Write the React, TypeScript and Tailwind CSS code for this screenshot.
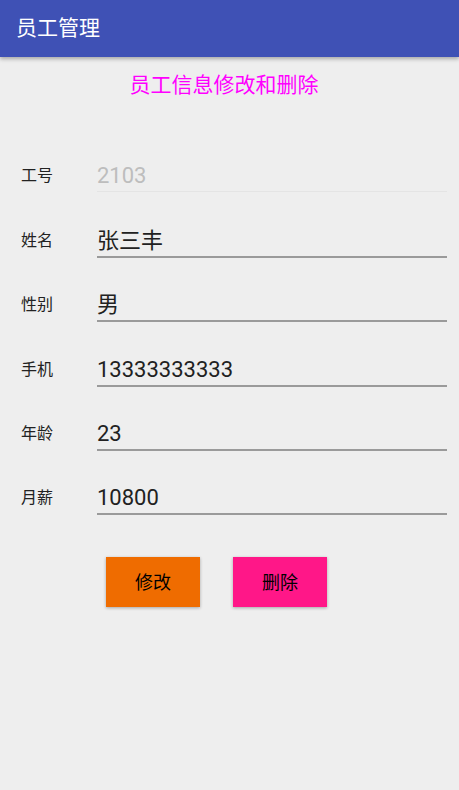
const font = { fontFamily: 'Roboto, "Noto Sans CJK SC", sans-serif' };

interface Field {
  label: string;
  value: string;
  disabled?: boolean;
}

const fields: Field[] = [
  { label: '工号', value: '2103', disabled: true },
  { label: '姓名', value: '张三丰' },
  { label: '性别', value: '男' },
  { label: '手机', value: '13333333333' },
  { label: '年龄', value: '23' },
  { label: '月薪', value: '10800' },
];

export default function App() {
  return (
    <div className="w-[459px] h-[790px] bg-[#eeeeee] flex flex-col" style={font}>
      <header className="h-[57px] shrink-0 bg-[#3f51b5] flex items-center pl-4 shadow-[0_2px_4px_rgba(0,0,0,0.3)] z-10">
        <span className="text-white text-[21px] leading-none">员工管理</span>
      </header>

      <div className="pt-[16px] pr-[11px] text-center text-[#ff00ff] text-[21px] leading-[24px]">
        员工信息修改和删除
      </div>

      <div className="mt-[32px] flex flex-col">
        {fields.map((f) => (
          <div key={f.label} className="h-[64.4px] flex items-end pl-[21px] pr-[12px]">
            <span className="w-[76px] pb-[4px] text-[16px] leading-[26px] text-[#222]">{f.label}</span>
            <div
              className={
                'flex-1 flex items-end pb-[2px] ' +
                (f.disabled ? 'border-b border-[#e4e4e4] mb-[1px]' : 'border-b-2 border-[#9a9a9a]')
              }
            >
              <span
                className={
                  'text-[22px] leading-[26px] ' + (f.disabled ? 'text-[#bdbdbd]' : 'text-[#212121]')
                }
              >
                {f.value}
              </span>
            </div>
          </div>
        ))}
      </div>

      <div className="mt-[42px] flex gap-[33px] pl-[106px]">
        <button className="w-[94px] h-[50px] bg-[#ef6c00] text-[18px] text-black shadow-[0_1px_3px_rgba(0,0,0,0.3)]">
          修改
        </button>
        <button className="w-[94px] h-[50px] bg-[#ff1788] text-[18px] text-black shadow-[0_1px_3px_rgba(0,0,0,0.3)]">
          删除
        </button>
      </div>
    </div>
  );
}
